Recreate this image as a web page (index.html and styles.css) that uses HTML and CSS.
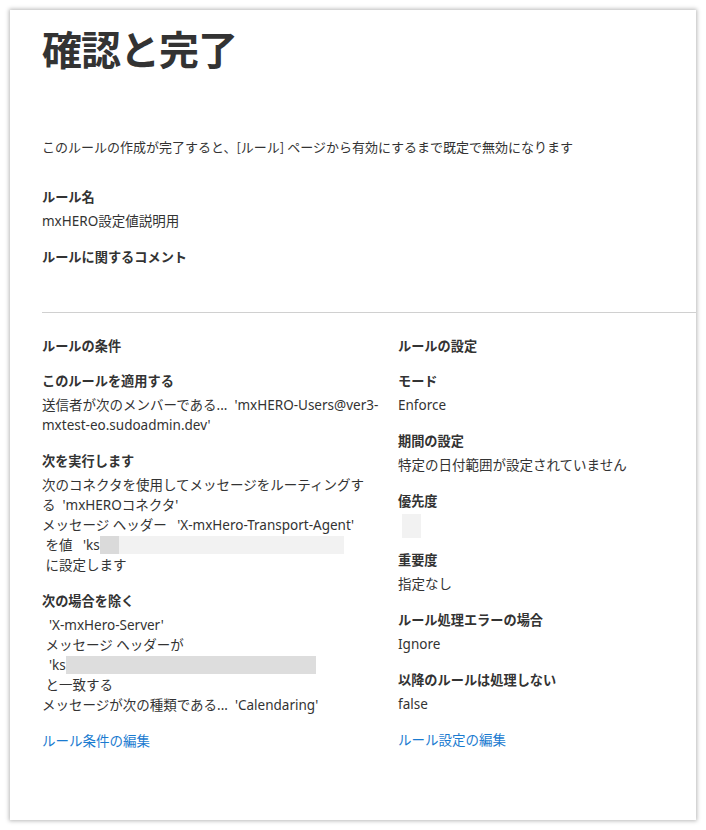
FILE: index.html
```html
<!DOCTYPE html>
<html lang="ja">
<head>
<meta charset="utf-8">
<title>確認と完了</title>
<link rel="stylesheet" href="styles.css">
</head>
<body>
<div class="card">
  <h1 class="title">確認と完了</h1>
  <p class="desc">このルールの作成が完了すると、[ルール] ページから有効にするまで既定で無効になります</p>

  <div class="top-fields">
    <div class="field">
      <div class="label">ルール名</div>
      <div class="value">mxHERO設定値説明用</div>
    </div>
    <div class="field">
      <div class="label">ルールに関するコメント</div>
      <div class="value empty"></div>
    </div>
  </div>

  <hr class="divider">

  <div class="columns">
    <section class="col col-left">
      <h2 class="section-title">ルールの条件</h2>
      <div class="field">
        <div class="label">このルールを適用する</div>
        <div class="value">送信者が次のメンバーである...  'mxHERO-Users@ver3-mxtest-eo.sudoadmin.dev'</div>
      </div>
      <div class="field">
        <div class="label">次を実行します</div>
        <div class="value">次のコネクタを使用してメッセージをルーティングす<br>る  'mxHEROコネクタ'</div>
        <div class="value">メッセージ ヘッダー   'X-mxHero-Transport-Agent'</div>
        <div class="value"> を値   'ks<span class="redact redact-a"></span><span class="redact redact-b"></span></div>
        <div class="value"> に設定します</div>
      </div>
      <div class="field">
        <div class="label">次の場合を除く</div>
        <div class="value">  'X-mxHero-Server'</div>
        <div class="value"> メッセージ ヘッダーが</div>
        <div class="value">  'ks<span class="redact redact-c"></span></div>
        <div class="value"> と一致する</div>
        <div class="value">メッセージが次の種類である...  'Calendaring'</div>
      </div>
      <a class="edit-link" href="#">ルール条件の編集</a>
    </section>

    <section class="col col-right">
      <h2 class="section-title">ルールの設定</h2>
      <div class="field">
        <div class="label">モード</div>
        <div class="value">Enforce</div>
      </div>
      <div class="field">
        <div class="label">期間の設定</div>
        <div class="value">特定の日付範囲が設定されていません</div>
      </div>
      <div class="field">
        <div class="label">優先度</div>
        <div class="value-box"></div>
      </div>
      <div class="field">
        <div class="label">重要度</div>
        <div class="value">指定なし</div>
      </div>
      <div class="field">
        <div class="label">ルール処理エラーの場合</div>
        <div class="value">Ignore</div>
      </div>
      <div class="field">
        <div class="label">以降のルールは処理しない</div>
        <div class="value">false</div>
      </div>
      <a class="edit-link" href="#">ルール設定の編集</a>
    </section>
  </div>
</div>
</body>
</html>
```

FILE: styles.css
```css
html, body {
  margin: 0;
  padding: 0;
  background: #ffffff;
}

body {
  font-family: "Noto Sans", "Noto Sans CJK JP", sans-serif;
  color: #333333;
  font-size: 13.5px;
  line-height: 20px;
}

.card {
  margin: 10px;
  width: 686px;
  height: 810px;
  box-sizing: border-box;
  background: #ffffff;
  box-shadow: 0 0 4px 1px rgba(0, 0, 0, 0.28);
  padding: 14px 0 0 32px;
}

.title {
  margin: 0;
  font-family: "Noto Sans CJK JP", sans-serif;
  font-size: 40px;
  line-height: 48px;
  font-weight: 700;
  color: #333333;
  letter-spacing: -1px;
}

.desc {
  margin: 65px 0 0 0;
  font-family: "Noto Sans CJK JP", sans-serif;
  font-size: 13px;
}

.top-fields {
  padding-top: 14px;
}

.field {
  margin-top: 16px;
}

.label {
  font-family: "Noto Sans CJK JP", sans-serif;
  font-weight: 700;
  font-size: 13.2px;
}

.value {
  margin-top: 4px;
  white-space: pre-wrap;
}

.value + .value {
  margin-top: 0;
}

.value.empty {
  height: 20px;
}

.divider {
  border: 0;
  border-top: 1px solid #d0d0d0;
  margin: 21px 0 0 0;
}

.columns {
  display: grid;
  grid-template-columns: 356px 1fr;
  margin-top: 23px;
}

.col-left {
  padding-right: 8px;
}

.section-title {
  margin: 0 0 -1px 0;
  font-family: "Noto Sans CJK JP", sans-serif;
  font-size: 13.2px;
  font-weight: 700;
  line-height: 20px;
}

.redact {
  display: inline-block;
  height: 18px;
  vertical-align: -4px;
}

.redact-a {
  width: 19px;
  background: #dadada;
}

.redact-b {
  width: 225px;
  background: #f2f2f2;
}

.redact-c {
  width: 250px;
  background: #dddddd;
}

.value-box {
  margin: 3px 0 -4px 4px;
  width: 19px;
  height: 24px;
  background: #f2f2f2;
}

.edit-link {
  display: block;
  margin-top: 15px;
  color: #1a7bd0;
  text-decoration: none;
  font-family: "Noto Sans CJK JP", sans-serif;
  font-size: 13.5px;
}
```
